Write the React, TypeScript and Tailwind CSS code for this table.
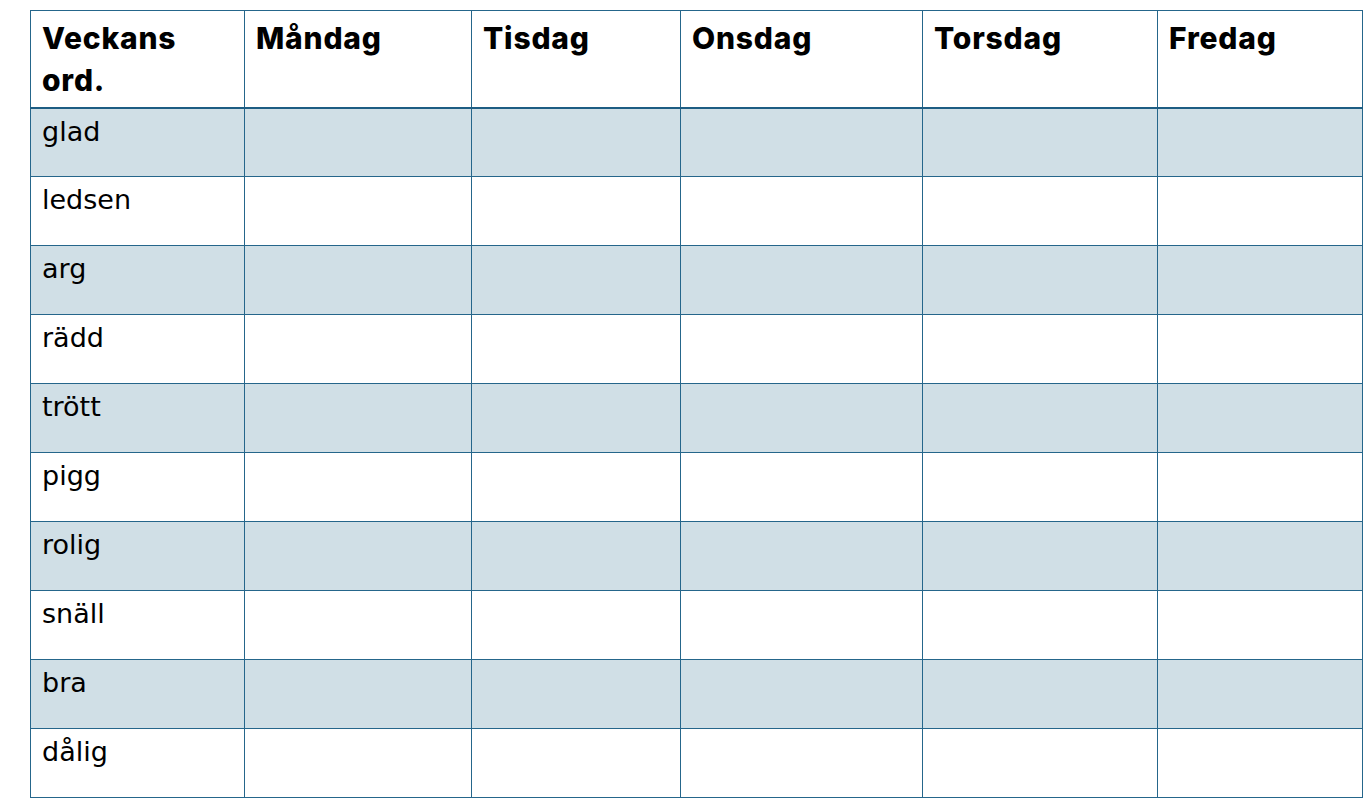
const days = ["Måndag", "Tisdag", "Onsdag", "Torsdag", "Fredag"];

const words = [
  "glad",
  "ledsen",
  "arg",
  "rädd",
  "trött",
  "pigg",
  "rolig",
  "snäll",
  "bra",
  "dålig",
];

// column widths in px, line to line
const colWidths = ["w-[214px]", "w-[227px]", "w-[209px]", "w-[242px]", "w-[235px]", "w-[205px]"];

export default function App() {
  return (
    <div className="min-h-[802px] w-[1372px] bg-white pl-[30px] pt-[10px]">
      <table className="w-[1333px] table-fixed border-collapse border border-[#25668b]">
        <colgroup>
          {colWidths.map((w, i) => (
            <col key={i} className={w} />
          ))}
        </colgroup>
        <thead>
          <tr className="h-[97px]">
            {["Veckans ord.", ...days].map((label) => (
              <th
                key={label}
                className="border border-b-2 border-[#25668b] border-b-[#1d5d83] px-[11px] pt-[6px] align-top text-left font-['Inter',sans-serif] text-[30px] font-extrabold leading-[42px] tracking-[0.8px] text-black"
              >
                {label}
              </th>
            ))}
          </tr>
        </thead>
        <tbody>
          {words.map((word, i) => (
            <tr
              key={word}
              className={`h-[69px] ${i % 2 === 0 ? "bg-[#d0dfe6]" : "bg-white"}`}
            >
              <td className="border border-[#25668b] px-[11px] pt-[7px] align-top font-['Comic_Sans_MS','DejaVu_Sans',sans-serif] text-[27px] leading-[32px] text-black">
                {word}
              </td>
              {days.map((d) => (
                <td key={d} className="border border-[#25668b]" />
              ))}
            </tr>
          ))}
        </tbody>
      </table>
    </div>
  );
}
